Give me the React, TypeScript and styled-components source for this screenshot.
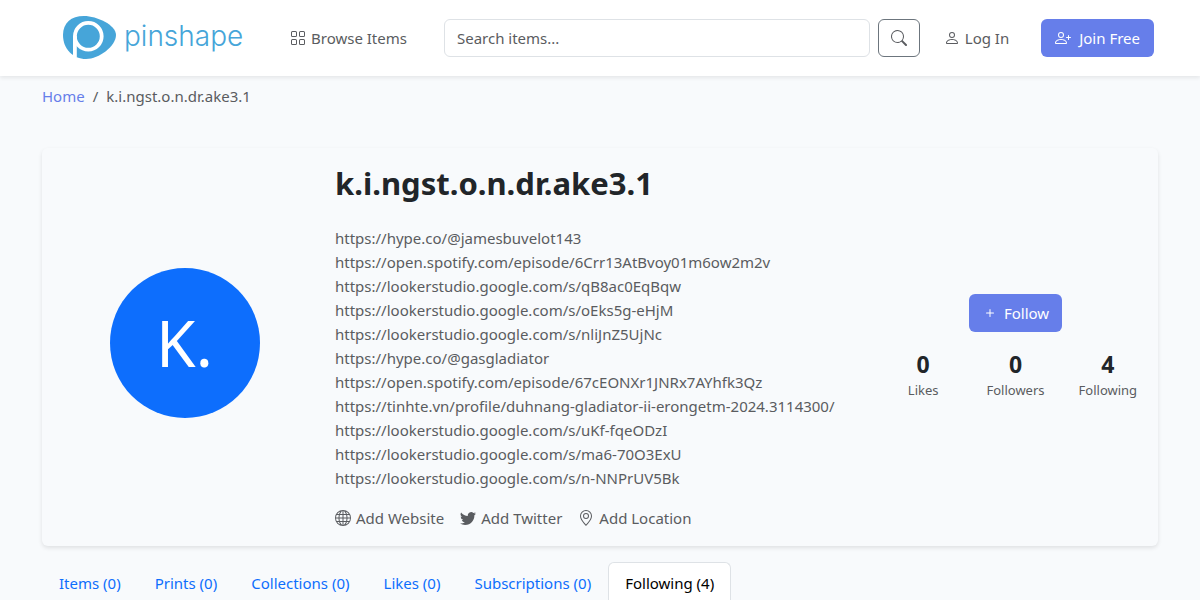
import React from "react";
import styled, { createGlobalStyle } from "styled-components";
import {
  BsGeoAlt,
  BsGlobe,
  BsGrid,
  BsPerson,
  BsPersonPlus,
  BsPlus,
  BsSearch,
  BsTwitter,
} from "react-icons/bs";

const GlobalStyle = createGlobalStyle`
  *, *::before, *::after { box-sizing: border-box; }
  body {
    margin: 0;
    background: #f8fafc;
    color: #212529;
    font: 400 15px/24px "Noto Sans", "Open Sans", sans-serif;
  }
  h1, p, ul, ol, dl, dd { margin: 0; padding: 0; }
  ul, ol { list-style: none; }
  a { text-decoration: none; }
  button, input { font: inherit; }
`;

const Header = styled.header`
  background: #fff;
  box-shadow: 0 2px 4px rgba(0, 0, 0, 0.08);
`;

const Container = styled.div`
  max-width: 1140px;
  margin: 0 auto;
  padding: 0 12px;
`;

const Navbar = styled(Container)`
  display: flex;
  align-items: center;
  height: 76px;
  padding: 0 16px 0 32px;
`;

const Brand = styled.a`
  display: flex;
  align-items: center;
  gap: 8px;
  width: 228px;
  flex: none;
  color: #46a5d9;
`;

const Wordmark = styled.span`
  padding-bottom: 4px;
  font: 300 28px/40px Inter, sans-serif;
`;

const NavLink = styled.a`
  display: inline-flex;
  align-items: center;
  gap: 5px;
  color: #5a5c60;
  white-space: nowrap;
`;

const SearchForm = styled.form`
  display: flex;
  flex: 1;
  gap: 8px;
  margin: 0 24px 0 37px;
`;

const SearchInput = styled.input`
  flex: 1;
  min-width: 0;
  height: 38px;
  padding: 6px 12px;
  border: 1px solid #dee2e6;
  border-radius: 6px;
  background: #fff;
  color: #212529;
  &::placeholder { color: #5a5c60; opacity: 1; }
`;

const SearchButton = styled.button`
  display: flex;
  align-items: center;
  justify-content: center;
  width: 42px;
  height: 38px;
  padding: 0;
  border: 1px solid #6c757d;
  border-radius: 6px;
  background: #fff;
  color: #5a5c60;
`;

const PrimaryButton = styled.button`
  display: inline-flex;
  align-items: center;
  gap: 6px;
  height: 38px;
  padding: 0 13px;
  border: 0;
  border-radius: 6px;
  background: #667eea;
  color: #fff;
  white-space: nowrap;
`;

const JoinButton = styled(PrimaryButton)`
  gap: 8px;
  margin-left: 32px;
  padding: 0 14px;
`;

const Breadcrumb = styled.ol`
  display: flex;
  gap: 8px;
  padding: 8px 0 40px;
  color: #5a5c60;
  a { color: #667eea; }
  li + li::before { content: "/"; padding-right: 8px; }
`;

const ProfileCard = styled.section`
  display: grid;
  grid-template-columns: 1fr 2fr 1fr;
  align-items: center;
  padding: 16px 4px;
  border-radius: 6px;
  box-shadow: 0 2px 4px rgba(0, 0, 0, 0.1);
`;

const Avatar = styled.div`
  display: flex;
  align-items: center;
  justify-content: center;
  justify-self: center;
  width: 150px;
  height: 150px;
  margin-bottom: 8px;
  border-radius: 50%;
  background: #0d6efd;
  color: #fff;
  font-size: 64px;
  font-weight: 400;
`;

const Details = styled.div`
  padding: 0 12px;
  color: #5a5c60;
`;

const UserName = styled.h1`
  margin-bottom: 24px;
  color: #212529;
  font-size: 31px;
  font-weight: 700;
  line-height: 38px;
`;

const ContactLinks = styled.div`
  display: flex;
  gap: 16px;
  margin-top: 16px;
`;

const Activity = styled.div`
  display: flex;
  flex-direction: column;
  align-items: center;
`;

const Stats = styled.dl`
  display: grid;
  grid-template-columns: repeat(3, 1fr);
  align-self: stretch;
  margin-top: 16px;
  text-align: center;
`;

const Stat = styled.div`
  display: flex;
  flex-direction: column-reverse;
  dt { color: #5a5c60; font-size: 13px; line-height: 20px; }
  dd { font-size: 23px; font-weight: 700; line-height: 32px; }
`;

const Tabs = styled.ul`
  display: flex;
  margin-top: 16px;
  border-bottom: 1px solid #dee2e6;
`;

const Tab = styled.a<{ $active?: boolean }>`
  display: block;
  margin-bottom: -1px;
  padding: 8px 16px;
  border: 1px solid transparent;
  border-color: ${(p) => (p.$active ? "#dee2e6 #dee2e6 #fff" : "transparent")};
  border-radius: 6px 6px 0 0;
  background: ${(p) => (p.$active ? "#fff" : "transparent")};
  color: ${(p) => (p.$active ? "#000" : "#0d6efd")};
  white-space: nowrap;
`;

const bio = [
  "https://hype.co/@jamesbuvelot143",
  "https://open.spotify.com/episode/6Crr13AtBvoy01m6ow2m2v",
  "https://lookerstudio.google.com/s/qB8ac0EqBqw",
  "https://lookerstudio.google.com/s/oEks5g-eHjM",
  "https://lookerstudio.google.com/s/nliJnZ5UjNc",
  "https://hype.co/@gasgladiator",
  "https://open.spotify.com/episode/67cEONXr1JNRx7AYhfk3Qz",
  "https://tinhte.vn/profile/duhnang-gladiator-ii-erongetm-2024.3114300/",
  "https://lookerstudio.google.com/s/uKf-fqeODzI",
  "https://lookerstudio.google.com/s/ma6-70O3ExU",
  "https://lookerstudio.google.com/s/n-NNPrUV5Bk",
];

const stats = [
  { label: "Likes", value: 0 },
  { label: "Followers", value: 0 },
  { label: "Following", value: 4 },
];

const tabs = [
  { label: "Items", count: 0 },
  { label: "Prints", count: 0 },
  { label: "Collections", count: 0 },
  { label: "Likes", count: 0 },
  { label: "Subscriptions", count: 0 },
  { label: "Following", count: 4 },
];

function LogoMark() {
  return (
    <svg width="54" height="44" viewBox="0 0 54 44" aria-hidden="true">
      <path
        fill="#46a5d9"
        d="M22 0C35 0 54 9 54 19C54 30 37 43 24 43C11 43 1 33 1 19C1 7 9 0 22 0Z"
      />
      <circle cx="26.3" cy="20.3" r="13.4" fill="none" stroke="#fff" strokeWidth="3.8" />
      <path d="M12.9 20V41" fill="none" stroke="#fff" strokeWidth="3.8" />
    </svg>
  );
}

export default function App() {
  return (
    <>
      <GlobalStyle />
      <Header>
        <Navbar as="nav">
          <Brand href="#">
            <LogoMark />
            <Wordmark>pinshape</Wordmark>
          </Brand>
          <NavLink href="#browse">
            <BsGrid size={16} />
            Browse Items
          </NavLink>
          <SearchForm role="search" onSubmit={(e) => e.preventDefault()}>
            <SearchInput type="search" placeholder="Search items..." aria-label="Search items" />
            <SearchButton type="submit" aria-label="Search">
              <BsSearch size={16} />
            </SearchButton>
          </SearchForm>
          <NavLink href="#login">
            <BsPerson size={16} />
            Log In
          </NavLink>
          <JoinButton type="button">
            <BsPersonPlus size={16} />
            Join Free
          </JoinButton>
        </Navbar>
      </Header>
      <Container as="main">
        <nav aria-label="Breadcrumb">
          <Breadcrumb>
            <li><a href="#home">Home</a></li>
            <li aria-current="page">k.i.ngst.o.n.dr.ake3.1</li>
          </Breadcrumb>
        </nav>
        <ProfileCard>
          <Avatar>K.</Avatar>
          <Details>
            <UserName>k.i.ngst.o.n.dr.ake3.1</UserName>
            {bio.map((line) => (
              <p key={line}>{line}</p>
            ))}
            <ContactLinks>
              <NavLink href="#website"><BsGlobe size={16} />Add Website</NavLink>
              <NavLink href="#twitter"><BsTwitter size={16} />Add Twitter</NavLink>
              <NavLink href="#location"><BsGeoAlt size={16} />Add Location</NavLink>
            </ContactLinks>
          </Details>
          <Activity>
            <PrimaryButton type="button">
              <BsPlus size={16} />
              Follow
            </PrimaryButton>
            <Stats>
              {stats.map((s) => (
                <Stat key={s.label}>
                  <dt>{s.label}</dt>
                  <dd>{s.value}</dd>
                </Stat>
              ))}
            </Stats>
          </Activity>
        </ProfileCard>
        <Tabs>
          {tabs.map((t) => (
            <li key={t.label}>
              <Tab href={`#${t.label.toLowerCase()}`} $active={t.label === "Following"}>
                {t.label} ({t.count})
              </Tab>
            </li>
          ))}
        </Tabs>
      </Container>
    </>
  );
}
